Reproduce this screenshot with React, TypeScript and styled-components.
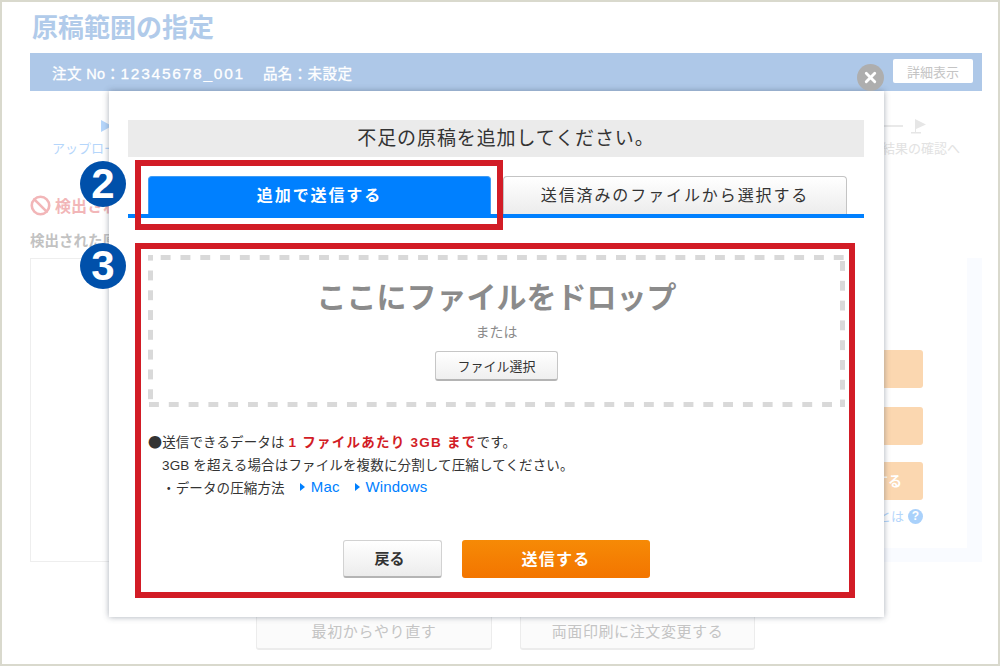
// libs
import { Ban, X } from 'lucide-react';
import styled, { createGlobalStyle } from 'styled-components';

const FONT = `"Liberation Sans", "Noto Sans CJK JP", sans-serif`;
const RED = '#d21c26';
const BLUE = '#0080ff';
const DASH = '#d9d9d9';

const GlobalStyle = createGlobalStyle`
  html, body {
    margin: 0;
    padding: 0;
    background: #fff;
  }
  body {
    font-family: ${FONT};
  }
`;

const Frame = styled.div`
  position: relative;
  width: 1000px;
  height: 666px;
  box-sizing: border-box;
  border: 2px solid #d9d9cd;
  padding: 12px 16px 0 28px;
  overflow: hidden;
  background: #fff;
`;

/* page behind the dialog */
const PageTitle = styled.h1`
  margin: 0 0 11px 2px;
  font-size: 26px;
  line-height: 28px;
  font-weight: bold;
  color: #b1cbea;
`;

const OrderBar = styled.div`
  display: flex;
  align-items: center;
  justify-content: space-between;
  height: 38px;
  padding: 0 9px 0 22px;
  background: #aec8e8;
  color: #fff;
  font-size: 14.5px;
`;

const OrderInfo = styled.div`
  display: flex;
  gap: 18px;
  letter-spacing: 0.4px;
  -webkit-text-stroke: 0.3px #fff;
`;

const OrderNumber = styled.span`
  font-size: 15.5px;
  letter-spacing: 1.75px;
`;

const DetailButton = styled.div`
  display: flex;
  align-items: center;
  justify-content: center;
  width: 80px;
  height: 24px;
  background: #fff;
  border-radius: 2px;
  margin-top: -2px;
  color: #c4c4c4;
  font-size: 13px;
`;

const Stepper = styled.div`
  display: flex;
  justify-content: space-between;
  height: 70px;
  padding: 27px 22px 0;
`;

const Step = styled.div`
  display: flex;
  flex-direction: column;
  width: 78px;
  gap: 7px;
`;

const StepTop = styled.div<{ $pad: number }>`
  display: flex;
  align-items: center;
  gap: 8px;
  height: 16px;
  padding-left: ${({ $pad }) => $pad}px;
`;

const Triangle = styled.span`
  width: 0;
  height: 0;
  border-left: 11px solid #b5d6fb;
  border-top: 6px solid transparent;
  border-bottom: 6px solid transparent;
`;

const Dash = styled.span`
  flex: none;
  width: 19px;
  height: 2px;
  background: #e9e9e9;
`;

const StepLabel = styled.div<{ $color: string }>`
  font-size: 13px;
  line-height: 16px;
  white-space: nowrap;
  color: ${({ $color }) => $color};
`;

const Warning = styled.div`
  display: flex;
  align-items: center;
  gap: 4px;
  height: 20px;
  margin-top: 7px;
  color: #f2b6b8;
  font-size: 16px;
  font-weight: bold;
`;

const ListCaption = styled.div`
  margin: 19px 0 9px;
  font-size: 14.5px;
  line-height: 15px;
  font-weight: bold;
  color: #c2c2c2;
`;

const Panels = styled.div`
  display: flex;
  height: 304px;
`;

const ListBox = styled.div`
  width: 520px;
  box-sizing: border-box;
  border: 1px solid #eee;
`;

const SidePanel = styled.div`
  flex: 1;
  display: flex;
  flex-direction: column;
  align-items: flex-end;
  padding: 92px 59px 0 0;
  box-shadow: inset -15px -14px 0 #f9fbff;
`;

const SideButton = styled.div<{ $top: number }>`
  width: 280px;
  height: 38px;
  margin-top: ${({ $top }) => $top}px;
  padding-right: 21px;
  box-sizing: border-box;
  text-align: right;
  border-radius: 3px;
  background: #fbd7b0;
  color: #fff;
  font-size: 14px;
  font-weight: bold;
  line-height: 38px;
`;

const HelpRow = styled.div`
  display: flex;
  align-items: center;
  gap: 4px;
  margin-top: 9px;
  font-size: 13px;
  line-height: 15px;
  color: #b5d6fb;
`;

const HelpMark = styled.span`
  display: flex;
  align-items: center;
  justify-content: center;
  width: 15px;
  height: 15px;
  border-radius: 50%;
  background: #a9d1fb;
  color: #fff;
  font-size: 12px;
  font-weight: bold;
`;

const BottomRow = styled.div`
  display: flex;
  gap: 28px;
  margin-top: 50px;
  padding-left: 226px;
`;

const BottomButton = styled.div<{ $width: number }>`
  display: flex;
  align-items: center;
  justify-content: center;
  width: ${({ $width }) => $width}px;
  height: 38px;
  box-sizing: border-box;
  border: 1px solid #ececec;
  border-bottom-width: 2px;
  border-radius: 3px;
  background: #fbfbfb;
  color: #c4c4c4;
  font-size: 15px;
  letter-spacing: 0.6px;
`;

/* dialog */
const Modal = styled.div`
  position: absolute;
  left: 107px;
  top: 89px;
  display: flex;
  flex-direction: column;
  width: 775px;
  height: 526px;
  box-sizing: border-box;
  padding-top: 29px;
  background: #fff;
  box-shadow: 0 0 6px rgba(60, 70, 90, 0.45);
`;

const CloseButton = styled.div`
  position: absolute;
  right: 0;
  top: -27px;
  display: flex;
  align-items: center;
  justify-content: center;
  width: 27px;
  height: 27px;
  border-radius: 50%;
  background: #aeaeae;
  color: #fff;
`;

const Heading = styled.div`
  margin: 0 20px 0 19px;
  height: 37px;
  padding-left: 20px;
  background: #ebebeb;
  color: #333;
  font-size: 19px;
  line-height: 38px;
  letter-spacing: 0.9px;
  text-align: center;
`;

const Tabs = styled.div`
  display: flex;
  gap: 12px;
  margin: 19px 20px 0 19px;
  padding-left: 20px;
  border-bottom: 4px solid ${BLUE};
`;

const Tab = styled.div<{ $active?: boolean }>`
  display: flex;
  align-items: center;
  justify-content: center;
  width: ${({ $active }) => ($active ? 343 : 344)}px;
  height: 38px;
  box-sizing: border-box;
  padding-bottom: 4px;
  border: 1px solid ${({ $active }) => ($active ? '#3f9cf5' : '#c4c4c4')};
  border-bottom: none;
  border-radius: 4px 4px 0 0;
  background: ${({ $active }) => ($active ? BLUE : 'linear-gradient(#fff, #ececec)')};
  color: ${({ $active }) => ($active ? '#fff' : '#333')};
  font-size: 16px;
  font-weight: ${({ $active }) => ($active ? 'bold' : 'normal')};
  letter-spacing: 1.9px;
`;

const TabHighlight = styled.div`
  position: absolute;
  left: 26px;
  top: 69px;
  width: 368px;
  height: 70px;
  box-sizing: border-box;
  border: 6px solid ${RED};
  pointer-events: none;
`;

const Badge = styled.div<{ $top: number }>`
  position: absolute;
  left: -29px;
  top: ${({ $top }) => $top}px;
  display: flex;
  align-items: center;
  justify-content: center;
  width: 46px;
  height: 46px;
  border-radius: 50%;
  background: #0050aa;
  color: #fff;
  font-size: 42px;
  font-weight: bold;
  line-height: 1;
`;

const Section = styled.div`
  display: flex;
  flex-direction: column;
  width: 720px;
  height: 355px;
  box-sizing: border-box;
  margin: 25px 0 0 26px;
  padding: 6px 4px 14px 7px;
  border: 6px solid ${RED};
`;

const DropZone = styled.div`
  display: flex;
  flex-direction: column;
  align-items: center;
  height: 152px;
  box-sizing: border-box;
  padding-top: 23px;
  background-image:
    linear-gradient(90deg, ${DASH} 10px, transparent 10px),
    linear-gradient(90deg, ${DASH} 10px, transparent 10px),
    linear-gradient(${DASH} 10px, transparent 10px),
    linear-gradient(${DASH} 10px, transparent 10px);
  background-size:
    19.8px 5px,
    19.8px 5px,
    5px 19.8px,
    5px 19.8px;
  background-position:
    12.7px 0,
    1px 100%,
    0 15.5px,
    100% 6px;
  background-repeat: repeat-x, repeat-x, repeat-y, repeat-y;
`;

const DropTitle = styled.div`
  font-size: 30px;
  line-height: 40px;
  font-weight: bold;
  color: #8b8b8b;
`;

const DropOr = styled.div`
  margin-top: 4px;
  font-size: 14px;
  line-height: 20px;
  color: #8b8b8b;
`;

const SmallButton = styled.div`
  display: flex;
  align-items: center;
  justify-content: center;
  width: 123px;
  height: 30px;
  margin-top: 9px;
  box-sizing: border-box;
  border: 1px solid #c6c6c6;
  border-bottom: 2px solid #b4b4b4;
  border-radius: 3px;
  background: linear-gradient(#fff, #efefef);
  color: #333;
  font-size: 13px;
`;

const Notes = styled.div`
  margin-top: 22px;
  font-size: 13.5px;
  letter-spacing: 0.14px;
  color: #333;
`;

const NoteLine = styled.div<{ $indent?: number }>`
  display: flex;
  align-items: center;
  height: 23px;
  padding-left: ${({ $indent }) => $indent ?? 0}px;
  white-space: pre;
`;

const Bullet = styled.span`
  font-family: "Noto Sans CJK JP", sans-serif;
  font-size: 14px;
`;

const Emphasis = styled.span`
  color: ${RED};
  font-weight: bold;
  letter-spacing: 1.25px;
`;

const DocLink = styled.span`
  display: inline-flex;
  align-items: center;
  gap: 6px;
  margin-left: 15px;
  color: ${BLUE};
  font-size: 15px;
`;

const LinkArrow = styled.span`
  width: 0;
  height: 0;
  border-left: 5px solid ${BLUE};
  border-top: 4px solid transparent;
  border-bottom: 4px solid transparent;
`;

const Footer = styled.div`
  display: flex;
  justify-content: center;
  gap: 20px;
  margin-top: auto;
`;

const BackButton = styled.div`
  display: flex;
  align-items: center;
  justify-content: center;
  width: 99px;
  height: 38px;
  box-sizing: border-box;
  padding: 0 6px 3px 0;
  border: 1px solid #d2d2d2;
  border-bottom: 2px solid #b4b4b4;
  border-radius: 3px;
  background: linear-gradient(#fff, #ececec);
  color: #333;
  font-size: 15px;
  font-weight: bold;
`;

const SendButton = styled.div`
  display: flex;
  align-items: center;
  justify-content: center;
  width: 188px;
  height: 38px;
  box-sizing: border-box;
  padding: 0 0 3px;
  border-radius: 3px;
  background: linear-gradient(#f68a06, #f37500);
  color: #fff;
  font-size: 16px;
  font-weight: bold;
  letter-spacing: 1.3px;
`;

export default function App() {
  return (
    <>
      <GlobalStyle />
      <Frame>
        <PageTitle>原稿範囲の指定</PageTitle>
        <OrderBar>
          <OrderInfo>
            <span>
              注文 No：<OrderNumber>12345678_001</OrderNumber>
            </span>
            <span>品名：未設定</span>
          </OrderInfo>
          <DetailButton>詳細表示</DetailButton>
        </OrderBar>

        <Stepper>
          <Step>
            <StepTop $pad={49}>
              <Triangle />
            </StepTop>
            <StepLabel $color="#b5d6fb">アップロード</StepLabel>
          </Step>
          <Step>
            <StepTop $pad={2}>
              <Dash />
              <svg width="16" height="15" viewBox="0 0 16 15" style={{ flex: 'none' }}>
                <path d="M4 0 L15 5.5 L5 10 V13 H10 V14.5 H0 V13 H4 Z" fill="#e6e6e6" />
              </svg>
            </StepTop>
            <StepLabel $color="#e2e2e2">結果の確認へ</StepLabel>
          </Step>
        </Stepper>

        <Warning>
          <Ban size={21} strokeWidth={3} />
          <span>検出された原稿</span>
        </Warning>
        <ListCaption>検出された原稿</ListCaption>

        <Panels>
          <ListBox />
          <SidePanel>
            <SideButton $top={0} />
            <SideButton $top={19} />
            <SideButton $top={17}>する</SideButton>
            <HelpRow>
              <span>とは</span>
              <HelpMark>?</HelpMark>
            </HelpRow>
          </SidePanel>
        </Panels>

        <BottomRow>
          <BottomButton $width={236}>最初からやり直す</BottomButton>
          <BottomButton $width={235}>両面印刷に注文変更する</BottomButton>
        </BottomRow>

        <Modal>
          <CloseButton>
            <X size={17} strokeWidth={4} />
          </CloseButton>
          <Heading>不足の原稿を追加してください。</Heading>
          <Tabs>
            <Tab $active>追加で送信する</Tab>
            <Tab>送信済みのファイルから選択する</Tab>
          </Tabs>
          <Section>
            <DropZone>
              <DropTitle>ここにファイルをドロップ</DropTitle>
              <DropOr>または</DropOr>
              <SmallButton>ファイル選択</SmallButton>
            </DropZone>
            <Notes>
              <NoteLine>
                <Bullet>●</Bullet>送信できるデータは <Emphasis>1 ファイルあたり 3GB まで</Emphasis>です。
              </NoteLine>
              <NoteLine $indent={14}>3GB を超える場合はファイルを複数に分割して圧縮してください。</NoteLine>
              <NoteLine $indent={14}>
                ・データの圧縮方法
                <DocLink>
                  <LinkArrow />
                  Mac
                </DocLink>
                <DocLink>
                  <LinkArrow />
                  Windows
                </DocLink>
              </NoteLine>
            </Notes>
            <Footer>
              <BackButton>戻る</BackButton>
              <SendButton>送信する</SendButton>
            </Footer>
          </Section>
          <TabHighlight />
          <Badge $top={70}>2</Badge>
          <Badge $top={152}>3</Badge>
        </Modal>
      </Frame>
    </>
  );
}
